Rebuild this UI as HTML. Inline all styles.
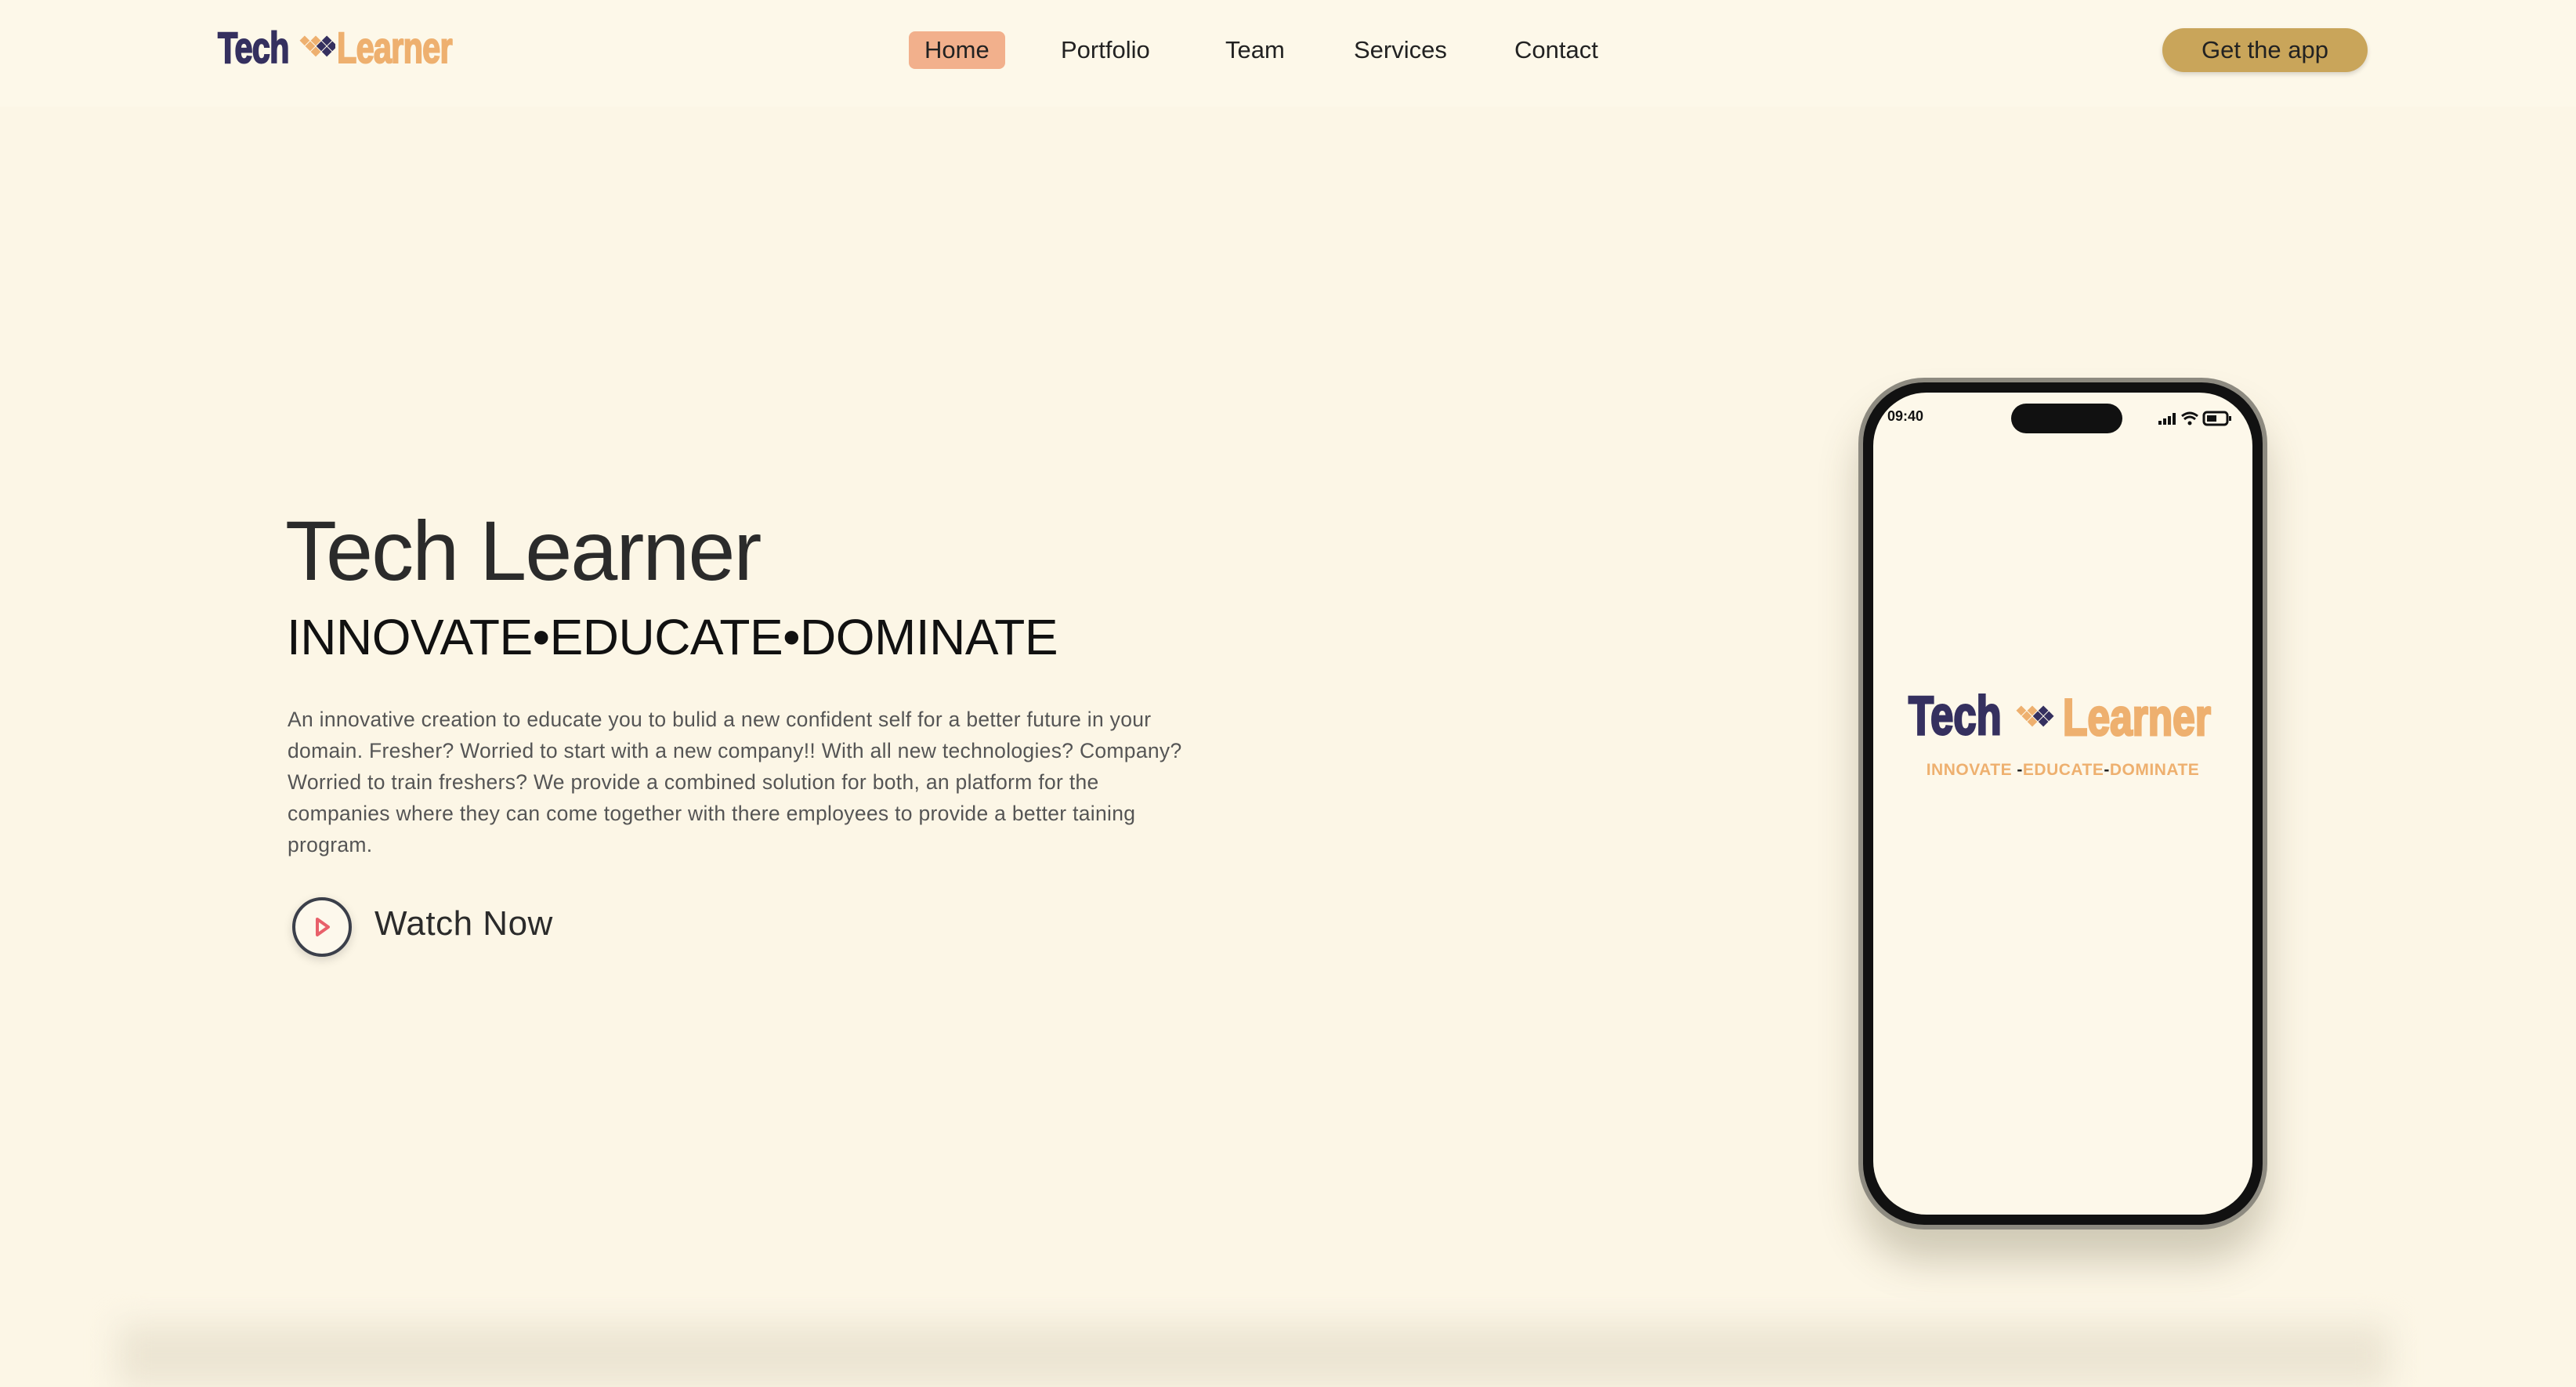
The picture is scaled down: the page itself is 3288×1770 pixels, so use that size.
<!DOCTYPE html>
<html><head><meta charset="utf-8">
<style>
*{margin:0;padding:0;box-sizing:border-box}
html,body{width:3288px;height:1734px;overflow:hidden;background:#fcf6e6;font-family:"Liberation Sans",sans-serif}
.hdr{position:absolute;left:0;top:0;width:3288px;height:136px;background:#fdf8e9}
.logo{position:absolute;left:278px;top:28px;height:60px;white-space:nowrap}
.logo span{font-weight:bold;font-size:56px;display:inline-block;transform:scaleX(.74);transform-origin:left top;letter-spacing:-1px;-webkit-text-stroke:2px currentColor}
.nav a{position:absolute;top:40px;font-size:31px;color:#222;text-decoration:none;line-height:48px}
.home{background:#f2b08c;border-radius:8px;padding:0 20px;}
.btn{position:absolute;left:2760px;top:36px;width:262px;height:56px;border-radius:28px;background:#c9a55a;color:#222;font-size:31px;line-height:56px;text-align:center;box-shadow:0 3px 6px rgba(0,0,0,.15)}
h1{position:absolute;left:364px;top:640px;font-size:108px;font-weight:normal;color:#2b2b2b;letter-spacing:-2px}
h2{position:absolute;left:366px;top:776px;font-size:64px;font-weight:normal;color:#111;letter-spacing:-0.5px}
p{position:absolute;left:367px;top:898px;width:1170px;font-size:26.5px;line-height:40px;color:#555;letter-spacing:.3px}
.play{position:absolute;left:373px;top:1145px;width:76px;height:76px;border-radius:50%;border:4px solid #3b3f4a;background:#fdf8ec;box-shadow:0 4px 12px rgba(0,0,0,.15)}
.wn{position:absolute;left:478px;top:1154px;font-size:44px;color:#2b2b2b;letter-spacing:.5px}
.phone{position:absolute;left:2372px;top:482px;width:522px;height:1087px;border-radius:84px;background:#111;border:6px solid #8d8a80;box-shadow:0 40px 50px rgba(80,70,40,.25)}
.screen{position:absolute;left:13px;top:13px;right:13px;bottom:13px;border-radius:68px;background:#fdf8ea;overflow:hidden}
.bot{position:absolute;left:150px;top:1690px;width:2900px;height:80px;background:#ece5d3;filter:blur(20px)}
.pl{-webkit-text-stroke:3px currentColor}
</style></head><body>
<div class="hdr"></div>
<div class="logo">
<span style="color:#35305f;position:absolute;left:0">Tech</span>
<svg style="position:absolute;left:100px;top:8px" width="50" height="50" viewBox="0 0 50 50">
<g transform="rotate(45 25 25)">
<rect x="24" y="4" width="9" height="9" fill="#35305f"/><rect x="34" y="4" width="9" height="9" fill="#35305f"/>
<rect x="24" y="14" width="9" height="9" fill="#35305f"/><rect x="34" y="14" width="9" height="9" fill="#35305f"/>
<rect x="14" y="14" width="9" height="9" fill="#eeb06f"/><rect x="14" y="24" width="9" height="9" fill="#eeb06f"/>
<rect x="24" y="24" width="9" height="9" fill="#eeb06f"/><rect x="4" y="24" width="9" height="9" fill="#eeb06f"/>
</g></svg>
<span style="color:#eeb06f;position:absolute;left:152px">Learner</span>
</div>
<div class="nav">
<a class="home" style="left:1160px">Home</a>
<a style="left:1354px">Portfolio</a>
<a style="left:1564px">Team</a>
<a style="left:1728px">Services</a>
<a style="left:1933px">Contact</a>
</div>
<div class="btn">Get the app</div>
<h1>Tech Learner</h1>
<h2>INNOVATE•EDUCATE•DOMINATE</h2>
<p>An innovative creation to educate you to bulid a new confident self for a better future in your domain. Fresher? Worried to start with a new company!! With all new technologies? Company? Worried to train freshers? We provide a combined solution for both, an platform for the companies where they can come together with there employees to provide a better taining program.</p>
<div class="play"><svg width="68" height="68" viewBox="0 0 68 68"><path d="M28 24 L42 34 L28 44 Z" fill="none" stroke="#e8606a" stroke-width="4" stroke-linejoin="round"/></svg></div>
<div class="wn">Watch Now</div>
<div class="phone"><div class="screen">
<div style="position:absolute;left:18px;top:20px;font-size:18px;font-weight:bold;color:#111">09:40</div>
<div style="position:absolute;left:176px;top:14px;width:142px;height:38px;border-radius:19px;background:#111"></div>
<svg style="position:absolute;left:364px;top:22px" width="100" height="24" viewBox="0 0 100 24">
<rect x="0" y="14" width="4" height="5" fill="#111"/><rect x="6" y="11" width="4" height="8" fill="#111"/><rect x="12" y="8" width="4" height="11" fill="#111"/><rect x="18" y="4" width="4" height="15" fill="#111"/>
<path d="M30 8 Q40 0 50 8 M33 12 Q40 6 47 12" stroke="#111" stroke-width="3" fill="none"/><circle cx="40" cy="17" r="2.5" fill="#111"/>
<rect x="58" y="3" width="30" height="16" rx="4" stroke="#111" stroke-width="3" fill="none"/><rect x="62" y="7" width="12" height="8" fill="#111"/><rect x="90" y="8" width="3" height="6" fill="#111"/>
</svg>
<div style="position:absolute;left:45px;top:372px;white-space:nowrap;height:70px;width:430px">
<span class="pl" style="position:absolute;left:0;font-weight:bold;font-size:70px;color:#35305f;transform:scaleX(.75);transform-origin:left top;display:inline-block">Tech</span>
<svg style="position:absolute;left:130px;top:18px" width="56" height="50" viewBox="0 0 50 50"><g transform="rotate(45 25 25)"><rect x="24" y="4" width="9" height="9" fill="#35305f"/><rect x="34" y="4" width="9" height="9" fill="#35305f"/><rect x="24" y="14" width="9" height="9" fill="#35305f"/><rect x="34" y="14" width="9" height="9" fill="#35305f"/><rect x="14" y="14" width="9" height="9" fill="#eeb06f"/><rect x="14" y="24" width="9" height="9" fill="#eeb06f"/><rect x="24" y="24" width="9" height="9" fill="#eeb06f"/><rect x="4" y="24" width="9" height="9" fill="#eeb06f"/></g></svg>
<span class="pl" style="position:absolute;left:197px;top:4px;font-weight:bold;font-size:66px;color:#eeb06f;transform:scaleX(.78);transform-origin:left top;display:inline-block">Learner</span>
</div>
<div style="position:absolute;left:0;right:0;top:470px;text-align:center;font-size:21px;font-weight:bold;color:#eeb06f;letter-spacing:.5px">INNOVATE <span style="color:#222">-</span>EDUCATE<span style="color:#222">-</span>DOMINATE</div>
</div></div>
<div class="bot"></div>
</body></html>
